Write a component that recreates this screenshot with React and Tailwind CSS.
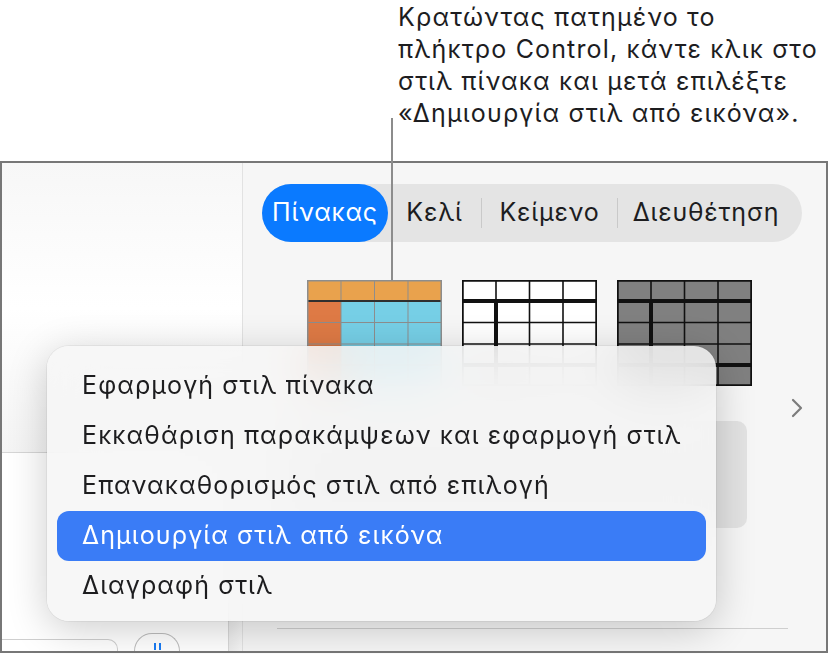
import React from "react";

const MENU_ITEMS = [
  "Εφαρμογή στιλ πίνακα",
  "Εκκαθάριση παρακάμψεων και εφαρμογή στιλ",
  "Επανακαθορισμός στιλ από επιλογή",
  "Δημιουργία στιλ από εικόνα",
  "Διαγραφή στιλ",
];

const TABS = ["Πίνακας", "Κελί", "Κείμενο", "Διευθέτηση"];

/* table style thumbnails */
const COLS = [0, 34, 67.5, 101, 135];
const ROWS = [0, 21, 42.5, 64, 85, 106];

function StyleThumb({ variant }) {
  const cells = [];
  for (let r = 0; r < 5; r++) {
    for (let c = 0; c < 4; c++) {
      let fill = "#fff";
      if (variant === "color") {
        if (r === 0) fill = "#E9A24D";
        else if (c === 0) fill = "#DE7A45";
        else fill = "#76CFE6";
      } else if (variant === "gray") {
        fill = "#808080";
      }
      cells.push(
        <rect
          key={`${r}-${c}`}
          x={COLS[c]}
          y={ROWS[r]}
          width={COLS[c + 1] - COLS[c]}
          height={ROWS[r + 1] - ROWS[r]}
          fill={fill}
        />
      );
    }
  }

  const line = variant === "color" ? "#8d8d8d" : "#111";
  const thin = variant === "color" ? 1 : 1.6;
  const thick = variant === "color" ? 0 : 4;

  return (
    <svg width="135" height="106" viewBox="0 0 135 106" className="block">
      {cells}
      {/* grid */}
      {COLS.slice(1, 4).map((x) => (
        <line key={`v${x}`} x1={x} y1="0" x2={x} y2="106" stroke={line} strokeWidth={thin} />
      ))}
      {ROWS.slice(1, 5).map((y) => (
        <line key={`h${y}`} x1="0" y1={y} x2="135" y2={y} stroke={line} strokeWidth={thin} />
      ))}
      {variant === "color" ? (
        <line x1="0" y1="21" x2="135" y2="21" stroke="#2f2f2f" strokeWidth="2" />
      ) : (
        <>
          <line x1="0" y1="21" x2="135" y2="21" stroke="#111" strokeWidth={thick} />
          <line x1="34" y1="21" x2="34" y2="106" stroke="#111" strokeWidth={thick} />
          <line x1="0" y1="85" x2="135" y2="85" stroke="#111" strokeWidth={thick} />
        </>
      )}
      <rect x="0.75" y="0.75" width="133.5" height="104.5" fill="none" stroke={line} strokeWidth={variant === "color" ? 1.5 : 2} />
    </svg>
  );
}

export default function App() {
  return (
    <div className="relative h-[654px] w-[830px] overflow-hidden bg-white font-['Inter','Noto_Sans',sans-serif] text-[#1d1d1f]">
      {/* caption */}
      <div className="h-[161px] pl-[398px] pt-[1px] text-[25px] leading-[32px] tracking-[1.15px]">
        <p>Κρατώντας πατημένο το</p>
        <p>πλήκτρο Control, κάντε κλικ στο</p>
        <p>στιλ πίνακα και μετά επιλέξτε</p>
        <p>«Δημιουργία στιλ από εικόνα».</p>
      </div>

      {/* window frame */}
      <div className="flex h-[492px] w-[828px] border-2 border-[#777]">
        {/* sidebar */}
        <div className="flex w-[240px] flex-col bg-white">
          <div className="h-[290px] border-b border-[#d6d6d6] bg-gradient-to-b from-[#f7f7f7] via-white to-[#f4f4f4]" />
          <div className="flex flex-1">
            <div className="flex flex-1 flex-col justify-end">
              <div className="flex items-end gap-[16px]">
                <div className="h-[12px] w-[116px] rounded-tr-[10px] border-r border-t border-[#cfcfcf]" />
                <div className="flex h-[18px] w-[46px] items-end justify-center gap-[3px] rounded-t-full border-x border-t border-[#bdbdbd] pb-[1px]">
                  <span className="h-[7px] w-[2px] bg-[#1a7cf5]" />
                  <span className="h-[7px] w-[2px] bg-[#1a7cf5]" />
                </div>
              </div>
            </div>
            <div className="w-[14px] border-l border-[#d8d8d8] bg-gradient-to-r from-[#ececec] to-[#f6f6f6]" />
          </div>
        </div>

        {/* inspector */}
        <div className="relative flex flex-1 flex-col border-l border-[#e2e2e2] bg-[#f6f6f6]">
          <div className="ml-[19px] mt-[21px] flex h-[58px] w-[540px] items-center rounded-full bg-[#e4e4e4] text-[25px] tracking-[0.8px]">
            <div className="flex h-full w-[126px] items-center justify-center rounded-full bg-[#0a7aff] text-white">
              {TABS[0]}
            </div>
            <div className="flex w-[93px] justify-center">{TABS[1]}</div>
            <div className="h-[30px] w-px bg-[#c9c9c9]" />
            <div className="flex w-[135px] justify-center">{TABS[2]}</div>
            <div className="h-[30px] w-px bg-[#c9c9c9]" />
            <div className="flex flex-1 justify-center pr-[8px]">{TABS[3]}</div>
          </div>

          <div className="ml-[64px] mt-[38px] flex gap-[20px]">
            <StyleThumb variant="color" />
            <StyleThumb variant="line" />
            <StyleThumb variant="gray" />
          </div>

          <svg
            className="absolute left-[548px] top-[235px]"
            width="12"
            height="20"
            viewBox="0 0 12 20"
            fill="none"
          >
            <path d="M2 2l8 8-8 8" stroke="#7c7c7c" strokeWidth="2.2" strokeLinecap="round" strokeLinejoin="round" />
          </svg>

          <div className="ml-[46px] mt-[35px] h-[107px] w-[458px] rounded-[10px] bg-[#e3e3e3]" />

          <div className="ml-[34px] mr-[38px] mt-auto mb-[22px] h-px bg-[#cfcfcf]" />
        </div>
      </div>

      {/* leader line */}
      <div className="absolute left-[391px] top-[118px] h-[163px] w-[2px] bg-[#8c8c8c]" />

      {/* context menu */}
      <div className="absolute left-[47px] top-[346px] w-[669px] rounded-[22px] bg-[#f6f6f6]/85 px-[10px] pb-[10px] pt-[15px] shadow-[0_8px_40px_rgba(0,0,0,0.2),0_0_0_1px_rgba(0,0,0,0.05)] backdrop-blur-xl">
        {MENU_ITEMS.map((item, i) => (
          <div
            key={item}
            className={`flex h-[50px] items-center rounded-[12px] pl-[25px] text-[25px] tracking-[1.1px] ${
              i === 3 ? "bg-[#3a7cf6] text-white" : "text-[#1d1d1f]"
            }`}
          >
            {item}
          </div>
        ))}
      </div>
    </div>
  );
}
